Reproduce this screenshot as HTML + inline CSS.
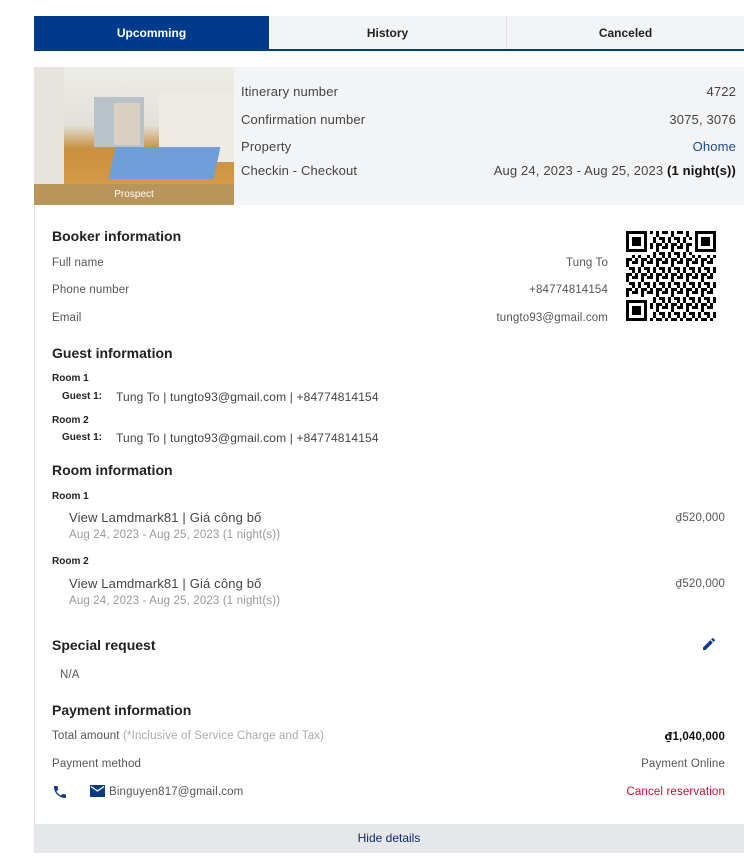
<!DOCTYPE html>
<html><head><meta charset="utf-8"><style>
*{margin:0;padding:0;box-sizing:border-box}
body{width:744px;height:858px;background:#fff;font-family:"Liberation Sans",sans-serif;color:#333;position:relative;overflow:hidden}
.a{position:absolute;white-space:nowrap}
.r{text-align:right}
.tab{position:absolute;top:16px;height:34px;font-size:12px;font-weight:bold;text-align:center;line-height:34px;color:#222;background:#f3f4f6}
.h{font-size:14px;font-weight:bold;color:#222}
.l{font-size:11.5px;color:#555;letter-spacing:.15px}
.g{font-size:10px;font-weight:bold;color:#222}
.t{font-size:12.5px;color:#444;letter-spacing:.15px}
.s{font-size:11.5px;color:#999;letter-spacing:.15px}
.d{font-family:"DejaVu Sans",sans-serif;font-size:11px}
</style></head><body>
<div class="tab" style="left:34px;width:235px;background:#003a8c;color:#fff">Upcomming</div>
<div class="tab" style="left:269px;width:238px;border-right:1px solid #e2e2e2">History</div>
<div class="tab" style="left:507px;width:237px">Canceled</div>
<div class="a" style="left:34px;top:49px;width:710px;height:2px;background:#003a8c"></div>

<div class="a" style="left:34px;top:67px;width:710px;height:786px;border-left:1px solid #e5e5e5"></div>
<div class="a" style="left:234px;top:67px;width:510px;height:138px;background:#f3f4f6"></div>
<div class="a" style="left:34px;top:67px;width:200px;height:117px;overflow:hidden;background:linear-gradient(180deg,#eeede8 0%,#e2e0d8 50%,#c89040 70%,#d49a48 100%)">
 <div class="a" style="left:0;top:0;width:30px;height:117px;background:#e6e4dc"></div>
 <div class="a" style="left:60px;top:30px;width:50px;height:50px;background:#b9c2c8"></div>
 <div class="a" style="left:80px;top:36px;width:26px;height:42px;background:#d8d0c0"></div>
 <div class="a" style="left:125px;top:25px;width:75px;height:70px;background:#ecebe5"></div>
 <div class="a" style="left:78px;top:80px;width:105px;height:32px;background:#6f9fd8;transform:skewX(-12deg)"></div>
</div>
<div class="a" style="left:34px;top:184px;width:200px;height:21px;background:#b8955a;color:#fff;font-size:10px;text-align:center;line-height:21px">Prospect</div>

<div class="a t" style="left:241px;top:84px;font-size:13px">Itinerary number</div>
<div class="a t" style="left:241px;top:112px;font-size:13px">Confirmation number</div>
<div class="a t" style="left:241px;top:139px;font-size:13px">Property</div>
<div class="a t" style="left:241px;top:163px;font-size:13px">Checkin - Checkout</div>
<div class="a t r" style="right:8px;top:84px;font-size:13px">4722</div>
<div class="a t r" style="right:8px;top:112px;font-size:13px">3075, 3076</div>
<div class="a t r" style="right:8px;top:139px;font-size:13px;color:#1a4a9a">Ohome</div>
<div class="a t r" style="right:8px;top:163px;font-size:13px">Aug 24, 2023 - Aug 25, 2023 <b style="color:#111">(1 night(s))</b></div>

<div class="a h" style="left:52px;top:228px">Booker information</div>
<div class="a l" style="left:52px;top:257px">Full name</div>
<div class="a l" style="left:52px;top:284px">Phone number</div>
<div class="a l" style="left:52px;top:312px">Email</div>
<div class="a l r" style="right:136px;top:257px">Tung To</div>
<div class="a l r" style="right:136px;top:284px">+84774814154</div>
<div class="a l r" style="right:136px;top:312px">tungto93@gmail.com</div>

<svg class="a" style="left:626px;top:231px" width="90" height="90" viewBox="0 0 90 90">
<defs><pattern id="p" width="15" height="15" patternUnits="userSpaceOnUse">
<rect x="0" y="0" width="3" height="6"/><rect x="6" y="0" width="6" height="3"/><rect x="3" y="6" width="6" height="3"/><rect x="12" y="6" width="3" height="6"/><rect x="0" y="12" width="6" height="3"/><rect x="9" y="12" width="3" height="3"/><rect x="6" y="9" width="3" height="3"/>
</pattern></defs>
<rect width="90" height="90" fill="url(#p)"/>
<g><rect x="0" y="0" width="24" height="24" fill="#fff"/><rect x="0" y="0" width="21" height="21"/><rect x="3" y="3" width="15" height="15" fill="#fff"/><rect x="6" y="6" width="9" height="9"/>
<rect x="66" y="0" width="24" height="24" fill="#fff"/><rect x="69" y="0" width="21" height="21"/><rect x="72" y="3" width="15" height="15" fill="#fff"/><rect x="75" y="6" width="9" height="9"/>
<rect x="0" y="66" width="24" height="24" fill="#fff"/><rect x="0" y="69" width="21" height="21"/><rect x="3" y="72" width="15" height="15" fill="#fff"/><rect x="6" y="75" width="9" height="9"/></g>
</svg>

<div class="a h" style="left:52px;top:345px">Guest information</div>
<div class="a g" style="left:52px;top:373px">Room 1</div>
<div class="a g" style="left:62px;top:391px">Guest 1:</div>
<div class="a t" style="left:116px;top:390px;font-size:12px">Tung To | tungto93@gmail.com | +84774814154</div>
<div class="a g" style="left:52px;top:415px">Room 2</div>
<div class="a g" style="left:62px;top:432px">Guest 1:</div>
<div class="a t" style="left:116px;top:431px;font-size:12px">Tung To | tungto93@gmail.com | +84774814154</div>

<div class="a h" style="left:52px;top:462px">Room information</div>
<div class="a g" style="left:52px;top:491px">Room 1</div>
<div class="a t" style="left:69px;top:510px;font-size:13px">View Lamdmark81 | Giá công bố</div>
<div class="a s" style="left:69px;top:529px">Aug 24, 2023 - Aug 25, 2023 (1 night(s))</div>
<div class="a l r" style="right:19px;top:511px"><span class="d">₫</span>520,000</div>
<div class="a g" style="left:52px;top:556px">Room 2</div>
<div class="a t" style="left:69px;top:576px;font-size:13px">View Lamdmark81 | Giá công bố</div>
<div class="a s" style="left:69px;top:595px">Aug 24, 2023 - Aug 25, 2023 (1 night(s))</div>
<div class="a l r" style="right:19px;top:577px"><span class="d">₫</span>520,000</div>

<div class="a h" style="left:52px;top:637px">Special request</div>
<svg class="a" style="left:701px;top:636px" width="16" height="16" viewBox="0 0 24 24"><path fill="#0d3a85" d="M3 17.25V21h3.75L17.8 9.94l-3.75-3.75L3 17.25zM20.7 7.04a1 1 0 000-1.41l-2.34-2.34a1 1 0 00-1.41 0l-1.83 1.83 3.75 3.75 1.83-1.83z"/></svg>
<div class="a l" style="left:60px;top:669px">N/A</div>

<div class="a h" style="left:52px;top:702px">Payment information</div>
<div class="a l" style="left:52px;top:730px">Total amount <span style="color:#aaa">(*Inclusive of Service Charge and Tax)</span></div>
<div class="a l r" style="right:19px;top:730px;font-weight:bold;color:#111"><span class="d" style="font-weight:bold">₫</span>1,040,000</div>
<div class="a l" style="left:52px;top:758px">Payment method</div>
<div class="a l r" style="right:19px;top:758px">Payment Online</div>
<svg class="a" style="left:52px;top:784px" width="16" height="16" viewBox="0 0 24 24"><path fill="#0d3a85" d="M6.6 10.8c1.4 2.8 3.8 5.1 6.6 6.6l2.2-2.2c.3-.3.7-.4 1-.2 1.1.4 2.3.6 3.6.6.6 0 1 .4 1 1V20c0 .6-.4 1-1 1C10.6 21 3 13.4 3 4c0-.6.4-1 1-1h3.5c.6 0 1 .4 1 1 0 1.3.2 2.5.6 3.6.1.3 0 .7-.2 1L6.6 10.8z"/></svg>
<svg class="a" style="left:90px;top:785px" width="15" height="12" viewBox="0 0 15 12"><rect width="15" height="12" fill="#0d3a85"/><path d="M1 1.5l6.5 4.5L14 1.5" stroke="#fff" stroke-width="1.3" fill="none"/></svg>
<div class="a l" style="left:109px;top:786px">Binguyen817@gmail.com</div>
<div class="a l r" style="right:19px;top:786px;color:#c8102e">Cancel reservation</div>

<div class="a" style="left:34px;top:824px;width:710px;height:29px;background:#e6e7ea;text-align:center;line-height:29px;font-size:12px;color:#0d2a6a">Hide details</div>
</body></html>
